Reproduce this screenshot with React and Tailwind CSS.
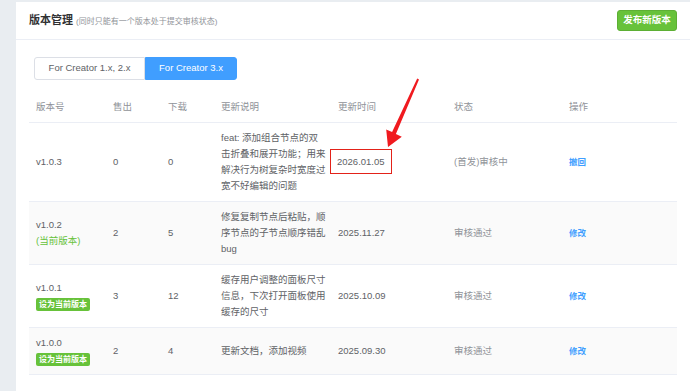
import React from 'react';

const FONT = { fontFamily: '"Liberation Sans", "Noto Sans CJK SC", sans-serif' };

const versions = [
  {
    ver: 'v1.0.3',
    sold: '0',
    downloads: '0',
    desc: 'feat: 添加组合节点的双击折叠和展开功能；用来解决行为树复杂时宽度过宽不好编辑的问题',
    date: '2026.01.05',
    status: '(首发)审核中',
    action: '撤回',
    highlight: true,
  },
  {
    ver: 'v1.0.2',
    current: true,
    sold: '2',
    downloads: '5',
    desc: '修复复制节点后粘贴，顺序节点的子节点顺序错乱 bug',
    date: '2025.11.27',
    status: '审核通过',
    action: '修改',
  },
  {
    ver: 'v1.0.1',
    badge: true,
    sold: '3',
    downloads: '12',
    desc: '缓存用户调整的面板尺寸信息，下次打开面板使用缓存的尺寸',
    date: '2025.10.09',
    status: '审核通过',
    action: '修改',
  },
  {
    ver: 'v1.0.0',
    badge: true,
    sold: '2',
    downloads: '4',
    desc: '更新文档，添加视频',
    date: '2025.09.30',
    status: '审核通过',
    action: '修改',
  },
];

const headers = ['版本号', '售出', '下载', '更新说明', '更新时间', '状态', '操作'];

// 标注箭头（截图上的红色箭头）
const Arrow = () => (
  <svg className="absolute left-0 top-0 pointer-events-none" width="690" height="391" viewBox="0 0 690 391">
    <polygon
      points="417.2,78.4 419,79.6 395.9,133.9 401.8,136.8 388,147 386.2,129.4 392.1,132.1"
      fill="#f01a1f"
    />
  </svg>
);

export default function App() {
  return (
    <div className="relative w-[690px] h-[391px] bg-[#e9edf1] pl-[16px] pt-[2px] overflow-hidden" style={FONT}>
      <div className="bg-white h-full flex flex-col">
        {/* Header */}
        <div className="h-[38px] flex items-center justify-between pl-[13px] pr-[13px] border-b border-[#ebeef5]">
          <div className="flex items-baseline gap-[3px]">
            <span className="text-[11px] font-semibold text-[#303133]">版本管理</span>
            <span className="text-[8px] text-[#909399]">(同时只能有一个版本处于提交审核状态)</span>
          </div>
          <button className="h-[21px] w-[60px] rounded-[3px] bg-[#67c23a] border border-[#5daf34] text-white text-[9.5px] font-semibold">
            发布新版本
          </button>
        </div>

        {/* Tabs */}
        <div className="pl-[18px] pt-[17px] flex">
          <div className="h-[23px] w-[111px] flex items-center justify-center border border-[#dcdfe6] rounded-l-[3px] text-[9.5px] text-[#606266]">
            For Creator 1.x, 2.x
          </div>
          <div className="h-[23px] w-[92px] flex items-center justify-center border border-[#409eff] bg-[#409eff] rounded-r-[3px] text-[9.5px] text-white">
            For Creator 3.x
          </div>
        </div>

        {/* Table */}
        <div className="pl-[13px] pt-[12px]">
          <table className="table-fixed w-[648px] border-collapse text-[9.5px] leading-[16px]">
            <colgroup>
              <col className="w-[77px]" />
              <col className="w-[55px]" />
              <col className="w-[53px]" />
              <col className="w-[117px]" />
              <col className="w-[116px]" />
              <col className="w-[115px]" />
              <col className="w-[115px]" />
            </colgroup>
            <thead>
              <tr className="h-[30px] border-b border-[#ebeef5]">
                {headers.map((h) => (
                  <th key={h} className="text-left font-normal text-[#909399] px-[7px]">{h}</th>
                ))}
              </tr>
            </thead>
            <tbody>
              {versions.map((v, i) => (
                <tr key={v.ver} className={`border-b border-[#ebeef5] ${i % 2 === 1 ? 'bg-[#fafafa]' : 'bg-white'}`}>
                  <td className="px-[7px] py-[7px] text-[#606266] align-middle">
                    <div>{v.ver}</div>
                    {v.current && <div className="text-[#67c23a]">(当前版本)</div>}
                    {v.badge && (
                      <div className="inline-block mt-[1px] px-[3px] h-[13px] leading-[13px] rounded-[2px] bg-[#67c23a] text-white text-[8px] font-semibold">
                        设为当前版本
                      </div>
                    )}
                  </td>
                  <td className="px-[7px] py-[7px] text-[#606266]">{v.sold}</td>
                  <td className="px-[7px] py-[7px] text-[#606266]">{v.downloads}</td>
                  <td className="pl-[7px] pr-[5px] py-[7px] text-[#606266]">{v.desc}</td>
                  <td className="px-[7px] py-[7px] text-[#606266]">
                    {v.highlight ? (
                      <span className="inline-block -ml-[8px] px-[6px] py-[3.5px] border-[1.5px] border-[#e32219]">{v.date}</span>
                    ) : (
                      v.date
                    )}
                  </td>
                  <td className="px-[7px] py-[7px] text-[#909399]">{v.status}</td>
                  <td className="px-[7px] py-[7px] text-[#409eff] text-[8.5px] font-semibold">{v.action}</td>
                </tr>
              ))}
            </tbody>
          </table>
        </div>
      </div>
      <Arrow />
    </div>
  );
}
